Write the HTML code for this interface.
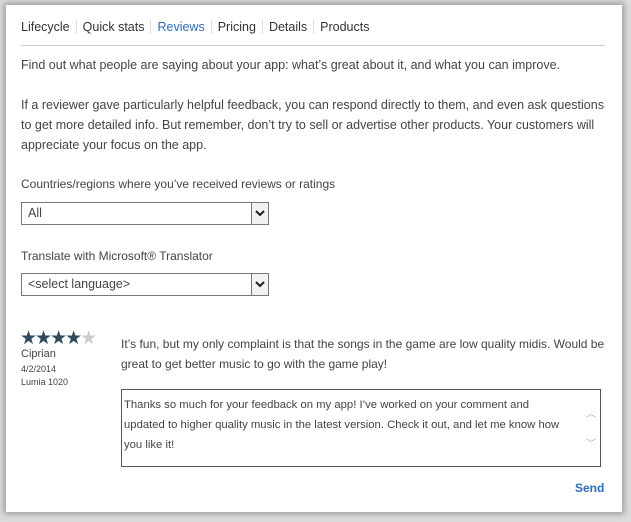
<!DOCTYPE html>
<html><head><style>
body{margin:0;width:631px;height:522px;background:#dcdcdc;font-family:"Liberation Sans",sans-serif;color:#444;overflow:hidden;position:relative}
.card{position:absolute;left:6px;top:5px;width:616px;height:507px;background:#fff;box-shadow:0 0 6px 2px #999}
.a{position:absolute;white-space:nowrap;font-size:12.5px}
.tabs span{padding:0 6px;border-right:1px solid #ddd}
.sel{position:absolute;left:15px;width:246px;height:21px;border:1px solid #777;background:#fff}
.sel .t{position:absolute;left:6px;top:3px;font-size:12.5px;color:#444}
.sel .b{position:absolute;right:0;top:0;width:16px;height:21px;border-left:1px solid #777;background:#f2f2f2}
</style></head><body>
<div class="card">
<div class="a tabs" style="left:9px;top:15px;color:#333"><span style="padding-left:6px">Lifecycle</span><span>Quick stats</span><span style="color:#2a6cc8">Reviews</span><span>Pricing</span><span>Details</span><span style="border:none">Products</span></div>
<div style="position:absolute;left:15px;top:40px;width:584px;height:1px;background:#ccc"></div>
<div class="a" style="left:15px;top:53px">Find out what people are saying about your app: what’s great about it, and what you can improve.</div>
<div class="a" style="left:15px;top:90px;line-height:20px">If a reviewer gave particularly helpful feedback, you can respond directly to them, and even ask questions<br>to get more detailed info. But remember, don’t try to sell or advertise other products. Your customers will<br>appreciate your focus on the app.</div>
<div class="a" style="left:15px;top:172px;font-size:12px">Countries/regions where you’ve received reviews or ratings</div>
<div class="sel" style="top:197px"><div class="t">All</div><div class="b"><svg width="16" height="21"><path d="M4 8l4 4 4-4" stroke="#222" stroke-width="2" fill="none"/></svg></div></div>
<div class="a" style="left:15px;top:244px;font-size:12px">Translate with Microsoft® Translator</div>
<div class="sel" style="top:268px"><div class="t">&lt;select language&gt;</div><div class="b"><svg width="16" height="21"><path d="M4 8l4 4 4-4" stroke="#222" stroke-width="2" fill="none"/></svg></div></div>
<div class="a" style="left:14px;top:322px;font-size:19px;color:#2e4a5e;letter-spacing:-2px">★★★★<span style="color:#ccc">★</span></div>
<div class="a" style="left:15px;top:343px;font-size:11px">Ciprian</div>
<div class="a" style="left:15px;top:359px;font-size:9px">4/2/2014</div>
<div class="a" style="left:15px;top:372px;font-size:9px">Lumia 1020</div>
<div class="a" style="left:115px;top:329px;line-height:20px;font-size:12px">It’s fun, but my only complaint is that the songs in the game are low quality midis. Would be<br>great to get better music to go with the game play!</div>
<div style="position:absolute;left:115px;top:384px;width:478px;height:76px;border:1px solid #555"></div>
<div class="a" style="left:118px;top:390px;line-height:20px;font-size:11.3px">Thanks so much for your feedback on my app! I’ve worked on your comment and<br>updated to higher quality music in the latest version. Check it out, and let me know how<br>you like it!</div>
<div class="a" style="left:580px;top:400px;color:#aaa;font-size:10px">︿</div>
<div class="a" style="left:580px;top:430px;color:#aaa;font-size:10px">﹀</div>
<div class="a" style="left:569px;top:476px;color:#2a6cc8;font-weight:bold;font-size:12px">Send</div>
</div>
</body></html>
